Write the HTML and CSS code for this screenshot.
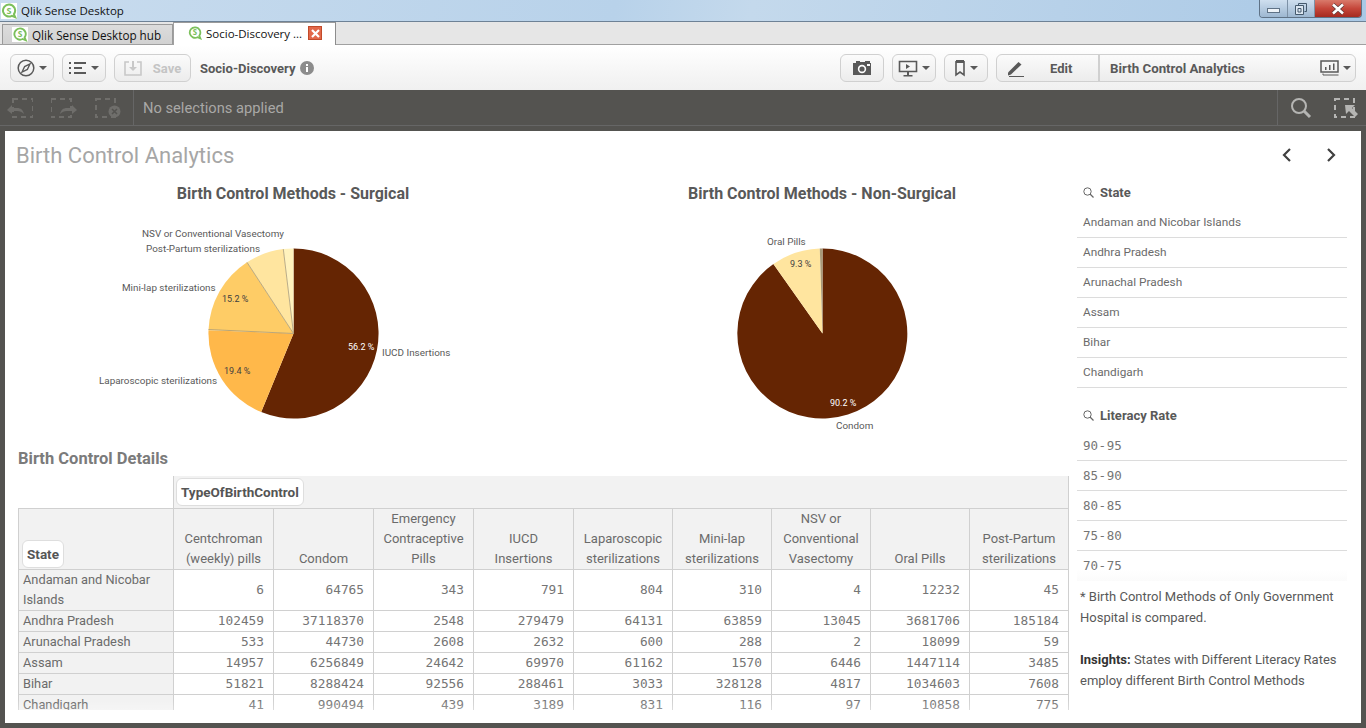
FILE: index.html
```html
<!DOCTYPE html>
<html lang="en">
<head>
<meta charset="utf-8">
<title>Qlik Sense Desktop</title>
<link rel="stylesheet" href="styles.css">
</head>
<body>
<header class="titlebar">
  <svg class="logo boxed" width="16" height="16" viewBox="0 0 16 16"><path d="M8 1.500a6 6 0 1 0 2.800 11.300l3.400 1.400-1.300-3.100A6 6 0 0 0 8 1.500z" fill="none" stroke="#7cc05c" stroke-width="2"/><text class="logo-s" x="8" y="10.500">S</text></svg>
  <span class="titlebar-text">Qlik Sense Desktop</span>
  <div class="winbtns">
    <span class="winbtn min"><i class="ico-min"></i></span>
    <span class="winbtn"><svg width="12" height="12" viewBox="0 0 12 12"><path d="M3.500.5h8v8h-2" fill="none" stroke="#44596d"/><path d="M3.500.5v2" stroke="#44596d"/><path d="M.5 2.500h8v9h-8z" fill="#dbe6f1" stroke="#44596d"/><path d="M3 5.500h3v3.500H3z" fill="none" stroke="#44596d"/></svg></span>
    <span class="winbtn close"><svg width="16" height="12" viewBox="0 0 16 12"><path d="M3 1.500l10 9m0-9l-10 9" stroke="#5a3a3a" stroke-width="4"/><path d="M3 1.500l10 9m0-9l-10 9" stroke="#fff" stroke-width="2.600"/></svg></span>
  </div>
</header>
<nav class="tabs">
  <div class="tab"><svg class="logo boxed" width="16" height="15" viewBox="0 0 16 16"><path d="M8 1.500a6 6 0 1 0 2.800 11.300l3.400 1.400-1.300-3.100A6 6 0 0 0 8 1.500z" fill="none" stroke="#7cc05c" stroke-width="2"/><text class="logo-s" x="8" y="10.500">S</text></svg>Qlik Sense Desktop hub</div>
  <div class="tab active"><svg class="logo" width="14" height="14" viewBox="0 0 16 16"><path d="M8 1.500a6 6 0 1 0 2.800 11.300l3.400 1.400-1.300-3.100A6 6 0 0 0 8 1.500z" fill="none" stroke="#7cc05c" stroke-width="2"/><text class="logo-s" x="8" y="10.500">S</text></svg><span class="tab-label">Socio-Discovery ...</span><span class="tab-x"><svg width="9" height="9" viewBox="0 0 9 9"><path d="M1 1l7 7m0-7L1 8" stroke="#fff" stroke-width="2.200"/></svg></span></div>
</nav>
<div class="toolbar">
  <div class="tool-group">
    <button class="btn w44"><svg width="18" height="18" viewBox="0 0 18 18"><circle cx="9" cy="9" r="7.800" fill="none" stroke="#595959" stroke-width="1.500"/><path d="M13 5l-2.600 5.400L5 13l2.600-5.400z" fill="none" stroke="#595959" stroke-width="1.300"/></svg><i class="caret"></i></button>
    <button class="btn w44"><svg width="18" height="14" viewBox="0 0 18 14"><path d="M0 1h2v2H0zM5 1h12v2H5zM0 6h2v2H0zM5 6h8v2H5zM0 11h2v2H0zM5 11h12v2H5z" fill="#595959"/></svg><i class="caret"></i></button>
    <button class="btn save"><svg width="18" height="16" viewBox="0 0 18 16"><path d="M5 2H1v13h16V2h-4" fill="none" stroke="#c8c8c8" stroke-width="1.600"/><path d="M8 1h2v6h3l-4 4-4-4h3z" fill="#c8c8c8"/></svg><b>Save</b></button>
    <span class="appname">Socio-Discovery</span>
    <svg class="info" width="14" height="14" viewBox="0 0 14 14"><circle cx="7" cy="7" r="7" fill="#8c8c8c"/><path d="M6 3h2v2H6zM6 6h2v5H6z" fill="#fff"/></svg>
  </div>
  <div class="tool-group">
    <button class="btn w44"><svg width="20" height="16" viewBox="0 0 20 16"><path d="M1 3h3V1h4v1h5V1h5v2h1v12H1z" fill="#595959"/><circle cx="10" cy="9" r="4.200" fill="#fff"/><circle cx="10" cy="9" r="2.600" fill="#595959"/><path d="M15 4h3v2h-3z" fill="#fff"/></svg></button>
    <button class="btn w44"><svg width="20" height="17" viewBox="0 0 20 17"><path d="M1.500 1.500h17v10h-17z" fill="none" stroke="#595959" stroke-width="1.600"/><path d="M8 4l4 2.500L8 9zM9 12h2v3H9zM5.500 15h9v1.500h-9z" fill="#595959"/></svg><i class="caret"></i></button>
    <button class="btn w44"><svg width="12" height="17" viewBox="0 0 12 17"><path d="M2 0h8v3H2z" fill="#595959"/><path d="M2 1v14l4-3 4 3V1" fill="none" stroke="#595959" stroke-width="1.600"/></svg><i class="caret"></i></button>
    <div class="sheetbar">
      <div class="edit"><svg width="18" height="18" viewBox="0 0 18 18"><path d="M1 13.500L11.500 3l3 2.500L4 15.500 1 16.500z" fill="#595959"/><path d="M2 17h15v1H2z" fill="#595959"/></svg><b>Edit</b></div>
      <div class="sheetname"><b>Birth Control Analytics</b><svg width="20" height="16" viewBox="0 0 20 16"><path d="M1 1h17v11H1z" fill="none" stroke="#595959" stroke-width="1.500"/><path d="M3 13.500v1.500h15.500" fill="none" stroke="#595959"/><path d="M5 7h1.500v3H5zM9 5h1.500v5H9zM13 3.500h1.500V10H13z" fill="#595959"/></svg><i class="caret"></i></div>
    </div>
  </div>
</div>
<div class="selbar">
  <div class="sel-actions">
    <svg width="26" height="20" viewBox="0 0 26 20"><path d="M6 1h20v18H6z" fill="none" stroke="#6f6e6b" stroke-width="2" stroke-dasharray="5 4"/><path d="M0 12l5-5v3h5c4 0 6 2 7 6-2-2-4-3-7-3H5v3z" fill="#6f6e6b"/></svg>
    <svg width="26" height="20" viewBox="0 0 26 20"><path d="M0 1h20v18H0z" fill="none" stroke="#6f6e6b" stroke-width="2" stroke-dasharray="5 4"/><path d="M26 12l-5-5v3h-5c-4 0-6 2-7 6 2-2 4-3 7-3h5v3z" fill="#6f6e6b"/></svg>
    <svg width="26" height="20" viewBox="0 0 26 20"><path d="M1 1h19v18H1z" fill="none" stroke="#6f6e6b" stroke-width="2" stroke-dasharray="5 4"/><circle cx="19.500" cy="13.500" r="6" fill="#6f6e6b"/><path d="M17 11l5 5m0-5l-5 5" stroke="#545350" stroke-width="1.500"/></svg>
  </div>
  <span class="sel-text">No selections applied</span>
  <div class="sel-right">
    <svg width="22" height="22" viewBox="0 0 22 22"><circle cx="9" cy="9" r="7" fill="none" stroke="#b5b5b3" stroke-width="2"/><path d="M14 14l6 6" stroke="#b5b5b3" stroke-width="3"/></svg>
    <svg width="24" height="22" viewBox="0 0 24 22"><path d="M1 2h19v18H1z" fill="none" stroke="#b5b5b3" stroke-width="2" stroke-dasharray="5 4"/><path d="M11 8h10l-3 3 6 6-3 3-6-6-3 3z" fill="#b5b5b3"/></svg>
  </div>
</div>
<main class="stage">
  <div class="sheet">
    <div class="sheet-head">
      <h1>Birth Control Analytics</h1>
      <div class="pager">
        <svg width="12" height="14" viewBox="0 0 12 14"><path d="M9 1L3 7l6 6" fill="none" stroke="#404040" stroke-width="2.200"/></svg>
        <svg width="12" height="14" viewBox="0 0 12 14"><path d="M3 1l6 6-6 6" fill="none" stroke="#404040" stroke-width="2.200"/></svg>
      </div>
    </div>
    <div class="sheet-body">
      <div class="left">
        <div class="charts">
          <section class="chart">
            <h2>Birth Control Methods - Surgical</h2>
            <svg width="534" height="262" viewBox="10 176 534 262">
              <path d="M293.500 333.500V248.500A85 85 0 1 1 261.200 412.100Z" fill="#652503"/>
              <path d="M293.500 333.500L261.200 412.100A85 85 0 0 1 208.500 330.200Z" fill="#ffb84a"/>
              <path d="M293.500 333.500L208.500 330.200A85 85 0 0 1 247 262.300Z" fill="#fecc66"/>
              <path d="M293.500 333.500L247 262.300A85 85 0 0 1 283.300 249.100Z" fill="#ffe59f"/>
              <path d="M293.500 333.500L283.300 249.100A85 85 0 0 1 293.500 248.500Z" fill="#fff2bd"/>
              <path d="M208.500 329.500L293.500 333.500L247 262.300M293.500 333.500L283.300 249.100" fill="none" stroke="#a89a78" stroke-width=".8"/>
              <text class="lbl" x="142" y="237">NSV or Conventional Vasectomy</text>
              <text class="lbl" x="146" y="252">Post-Partum sterilizations</text>
              <text class="lbl" x="122" y="291">Mini-lap sterilizations</text>
              <text class="lbl" x="99" y="384">Laparoscopic sterilizations</text>
              <text class="lbl" x="382" y="356">IUCD Insertions</text>
              <text class="pct" x="222" y="302">15.2 %</text>
              <text class="pct" x="224" y="374">19.4 %</text>
              <text class="pct light" x="348" y="350">56.2 %</text>
            </svg>
          </section>
          <section class="chart">
            <h2>Birth Control Methods - Non-Surgical</h2>
            <svg width="534" height="262" viewBox="555 176 534 262">
              <path d="M822.500 333.500V248.500A85 85 0 1 1 773.400 264Z" fill="#652503"/>
              <path d="M822.500 333.500L773.400 264A85 85 0 0 1 819.800 248.500Z" fill="#ffe59f"/>
              <path d="M822.500 333.500L819.800 248.500L822.500 248.500Z" fill="#a89a78"/>
              <text class="lbl" x="767" y="245">Oral Pills</text>
              <text class="lbl" x="836" y="429">Condom</text>
              <text class="pct" x="790" y="267">9.3 %</text>
              <text class="pct light" x="830" y="406">90.2 %</text>
            </svg>
          </section>
        </div>
        <section class="details">
          <h3>Birth Control Details</h3>
          <div class="table-wrap">
            <table>
              <colgroup><col class="c-state"><col class="c-1"><col class="c-1"><col class="c-1"><col class="c-1"><col class="c-2"><col class="c-2"><col class="c-2"><col class="c-2"><col class="c-2"></colgroup>
              <thead>
                <tr class="dim-row"><th class="blank"></th><th colspan="9" class="dim"><span class="chip">TypeOfBirthControl</span></th></tr>
                <tr class="head-row">
                  <th class="state-h"><span class="chip">State</span></th>
                  <th>Centchroman (weekly) pills</th><th>Condom</th><th>Emergency Contraceptive Pills</th><th>IUCD Insertions</th><th>Laparoscopic sterilizations</th><th>Mini-lap sterilizations</th><th>NSV or Conventional Vasectomy</th><th>Oral Pills</th><th>Post-Partum sterilizations</th>
                </tr>
              </thead>
              <tbody>
                <tr class="tall"><th>Andaman and Nicobar Islands</th><td>6</td><td>64765</td><td>343</td><td>791</td><td>804</td><td>310</td><td>4</td><td>12232</td><td>45</td></tr>
                <tr><th>Andhra Pradesh</th><td>102459</td><td>37118370</td><td>2548</td><td>279479</td><td>64131</td><td>63859</td><td>13045</td><td>3681706</td><td>185184</td></tr>
                <tr><th>Arunachal Pradesh</th><td>533</td><td>44730</td><td>2608</td><td>2632</td><td>600</td><td>288</td><td>2</td><td>18099</td><td>59</td></tr>
                <tr><th>Assam</th><td>14957</td><td>6256849</td><td>24642</td><td>69970</td><td>61162</td><td>1570</td><td>6446</td><td>1447114</td><td>3485</td></tr>
                <tr><th>Bihar</th><td>51821</td><td>8288424</td><td>92556</td><td>288461</td><td>3033</td><td>328128</td><td>4817</td><td>1034603</td><td>7608</td></tr>
                <tr><th>Chandigarh</th><td>41</td><td>990494</td><td>439</td><td>3189</td><td>831</td><td>116</td><td>97</td><td>10858</td><td>775</td></tr>
              </tbody>
            </table>
          </div>
        </section>
      </div>
      <aside class="side">
        <section class="filter state-filter">
          <h4><svg width="11" height="11" viewBox="0 0 11 11"><circle cx="4.500" cy="4.500" r="3.700" fill="none" stroke="#666" stroke-width="1"/><path d="M7 7l3.500 3.500" stroke="#666" stroke-width="1.200"/></svg>State</h4>
          <ul>
            <li>Andaman and Nicobar Islands</li><li>Andhra Pradesh</li><li>Arunachal Pradesh</li><li>Assam</li><li>Bihar</li><li>Chandigarh</li>
          </ul>
        </section>
        <section class="filter rate-filter">
          <h4><svg width="11" height="11" viewBox="0 0 11 11"><circle cx="4.500" cy="4.500" r="3.700" fill="none" stroke="#666" stroke-width="1"/><path d="M7 7l3.500 3.500" stroke="#666" stroke-width="1.200"/></svg>Literacy Rate</h4>
          <ul>
            <li>90 - 95</li><li>85 - 90</li><li>80 - 85</li><li>75 - 80</li><li class="last">70 - 75</li>
          </ul>
        </section>
        <div class="note">
          <p>* Birth Control Methods of Only Government Hospital is compared.</p>
          <p><b>Insights:</b> States with Different Literacy Rates employ different Birth Control Methods</p>
        </div>
      </aside>
    </div>
  </div>
</main>
</body>
</html>
```
FILE: styles.css
```css
* { box-sizing: border-box; }
html, body { margin: 0; padding: 0; height: 728px; overflow: hidden; }
body { font-family: Roboto, "Open Sans", sans-serif; color: #595959; background: #fff; display: flex; flex-direction: column; }
svg { display: block; flex: none; }
h1, h2, h3, h4, p, ul { margin: 0; padding: 0; }
ul { list-style: none; }

.titlebar { height: 22px; flex: none; display: flex; align-items: center; padding-left: 1px; background: linear-gradient(100deg, #c9dcee 0%, #b8d2ea 45%, #c4d9ec 55%, #aac9e6 100%); border-bottom: 1px solid #6e8296; font: 11.500px "Open Sans", sans-serif; color: #111; }
.titlebar-text { margin-left: 4px; }
.logo.boxed { background: #fff; }
.logo-s { font: 700 9px "Open Sans", sans-serif; fill: #7cc05c; text-anchor: middle; }
.winbtns { margin-left: auto; margin-right: 4px; align-self: flex-start; display: flex; height: 18px; border: 1px solid #5f7286; border-top: 0; border-radius: 0 0 4px 4px; overflow: hidden; }
.winbtn { width: 27px; display: flex; align-items: center; justify-content: center; background: linear-gradient(#cfdfef, #9db7d1); border-right: 1px solid #7d91a6; }
.winbtn.min { width: 28px; }
.winbtn.close { width: 46px; border: 0; background: linear-gradient(#d97a6b 0%, #c5463a 50%, #a52a20 100%); }
.ico-min { display: block; width: 13px; height: 5px; background: #eef3f8; border: 1px solid #5f7286; margin-top: 3px; }

.tabs { height: 23px; flex: none; display: flex; align-items: flex-end; background: #e6e6e6; border-bottom: 1px solid #a0a0a0; font: 11.700px "Open Sans", sans-serif; color: #111; padding-left: 2px; }
.tab { height: 20px; width: 171px; display: flex; align-items: center; gap: 4px; padding-left: 9px; background: linear-gradient(#dcdcdc, #d2d2d2); border: 1px solid #9a9a9a; border-bottom: 0; white-space: nowrap; }
.tab.active { height: 23px; width: 163px; background: #fff; border-left: 1px solid #a0a0a0; border-right: 1px solid #8d8d8d; border-bottom: 0; margin-bottom: -1px; padding: 0 13px 2px 14px; gap: 4px; font-size: 11.500px; }
.tab-x { display: flex; align-items: center; justify-content: center; width: 14px; height: 14px; margin-left: auto; background: #e2684a; border: 1px solid #c24a2a; }

.toolbar { height: 45px; flex: none; display: flex; justify-content: space-between; align-items: center; padding: 1px 10px 0; background: linear-gradient(#fff, #f0f0f0); }
.tool-group { display: flex; align-items: center; gap: 8px; }
.btn { height: 28px; display: flex; align-items: center; justify-content: center; gap: 4px; background: linear-gradient(#fbfbfb, #ececec); border: 1px solid #d0d0d0; border-radius: 6px; padding: 0; font: inherit; color: #595959; }
.w44 { width: 44px; }
.caret { display: block; width: 0; height: 0; border-left: 4px solid transparent; border-right: 4px solid transparent; border-top: 4px solid #595959; }
.save { width: 77px; gap: 11px; }
.save b { font-size: 13px; color: #c4c4c4; }
.appname { font-size: 13px; font-weight: 700; color: #595959; margin-left: 1px; margin-right: -4px; }
.sheetbar { width: 360px; height: 28px; display: flex; border: 1px solid #d0d0d0; border-radius: 6px; background: linear-gradient(#fbfbfb, #ececec); }
.edit { width: 103px; flex: none; display: flex; align-items: center; padding-left: 10px; gap: 25px; border-right: 2px solid #d0d0d0; font-size: 13px; }
.sheetname { flex: 1; display: flex; align-items: center; padding: 0 4px 0 10px; font-size: 13.300px; }
.sheetname b { margin-right: auto; }
.sheetname .caret { margin-left: 3px; }

.selbar { height: 36px; flex: none; display: flex; align-items: center; background: #545350; border-bottom: 1px solid #666; }
.sel-actions { width: 134px; height: 100%; display: flex; align-items: center; gap: 18px; padding-left: 7px; border-right: 1px solid #666; }
.sel-text { margin-left: 9px; font-size: 14.700px; color: #a9a8a6; }
.sel-right { margin-left: auto; height: 100%; width: 89px; display: flex; align-items: center; gap: 22px; padding-left: 12px; border-left: 1px solid #666; }

.stage { flex: 1; min-height: 0; padding: 5px; background: #545350; }
.sheet { height: 592px; background: #fff; display: flex; flex-direction: column; overflow: hidden; }
.sheet-head { height: 45px; flex: none; display: flex; justify-content: space-between; align-items: center; padding: 3px 24px 0 11px; }
h1 { font-size: 22px; font-weight: 400; color: #a6a6a6; }
.pager { display: flex; gap: 32px; }
.sheet-body { flex: 1; min-height: 0; display: flex; }
.left { width: 1064px; flex: none; }
.charts { display: flex; height: 262px; margin-left: 5px; }
.chart { position: relative; width: 534px; flex: none; }
.chart + .chart { margin-left: 11px; }
.chart h2 { position: absolute; top: 8px; left: 0; width: 100%; text-align: center; font-size: 16px; font-weight: 700; color: #595959; }
.chart:first-child h2 { left: 16px; }
.lbl { font-size: 9.900px; fill: #595959; }
.pct { font-size: 9px; fill: #3f3f3f; }
.pct.light { fill: #fff; }
.details { margin-left: 13px; }
h3 { font-size: 16.500px; font-weight: 700; color: #7b7b7b; height: 27px; line-height: 20px; margin-top: 11px; }
.table-wrap { height: 234px; overflow: hidden; width: 1051px; position: relative; }
.table-wrap::after { content: ""; position: absolute; left: 0; right: 0; bottom: 0; height: 10px; background: linear-gradient(rgba(255,255,255,0), rgba(255,255,255,.25)); }
table { border-collapse: collapse; table-layout: fixed; width: 1051px; font-size: 13px; color: #6b6b6b; }
.c-state { width: 155px; }
.c-1 { width: 100px; }
.c-2 { width: 99px; }
th, td { border: 1px solid #d0d0d0; font-weight: 400; }
thead th { background: #f2f2f2; text-align: center; vertical-align: bottom; padding: 0 6px; line-height: 20px; }
.dim-row { height: 32px; }
.head-row { height: 61px; }
th.blank { background: #fff; border: 0; border-right: 1px solid #d0d0d0; }
thead th.dim { text-align: left; padding: 2px 0 0 2px; vertical-align: top; border-top: 0; }
thead th.state-h { text-align: left; padding: 0 2px 1px 3px; }
.chip { display: inline-block; background: #fff; border: 1px solid #dedede; border-radius: 6px; padding: 3px 4px; font-size: 13.500px; font-weight: 700; color: #555; line-height: 20px; }
tbody th { background: #f2f2f2; text-align: left; padding: 0 4px; line-height: 20px; font-size: 12.800px; }
tbody td { text-align: right; padding: 0 9px 0 0; font: 12.800px "DejaVu Sans Mono", monospace; color: #757575; }
tbody tr { height: 21px; }
.tall { height: 41px; }

.side { flex: 1; min-width: 0; padding: 4px 14px 0 8px; }
.filter h4 { font-size: 13px; font-weight: 700; color: #595959; display: flex; align-items: center; gap: 6px; padding: 0 0 4px 6px; height: 28px; }
.filter ul { font-size: 11.800px; color: #6b6b6b; }
.filter li { height: 30px; line-height: 29px; padding-left: 6px; border-bottom: 1px solid #dcdcdc; }
.state-filter { margin-bottom: 15px; }
.rate-filter li { font-family: "DejaVu Sans Mono", monospace; font-size: 12.500px; word-spacing: -7px; color: #757575; }
.rate-filter .last { border: 0; background: linear-gradient(#fff 60%, #fbfbfb); }
.note { margin-top: 5px; padding-left: 3px; font-size: 13px; line-height: 21px; color: #595959; }
.note p { margin-bottom: 21px; }
.note b { color: #333; }
```
